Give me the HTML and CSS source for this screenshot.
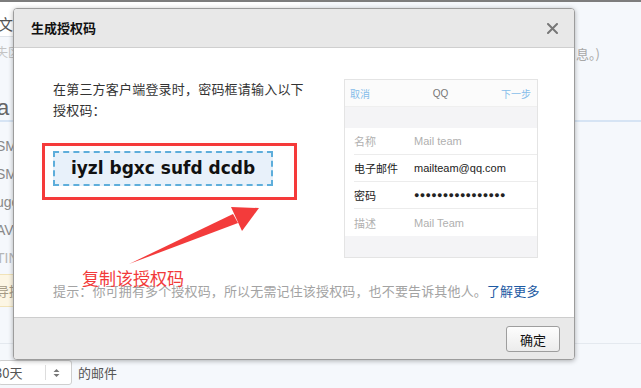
FILE: index.html
```html
<!DOCTYPE html>
<html lang="zh-CN">
<head>
<meta charset="utf-8">
<title>生成授权码</title>
<link rel="stylesheet" href="styles.css">
</head>
<body>
<div class="page">
  <div class="top-rule"></div>
  <div class="tabs"><span class="tab-txt">文</span></div>
  <div class="notice"><span class="notice-l">失区</span><span class="notice-r">息。)</span></div>
  <div class="big">a</div>
  <ul class="list">
    <li>SMTP</li>
    <li>SMTP</li>
    <li>uge</li>
    <li>AV</li>
    <li class="faint">TIN</li>
  </ul>
  <div class="tipbox">导提</div>
  <div class="lower-rule"></div>
  <div class="bottom-row">
    <div class="select"><span class="sel-val">30天</span><span class="sel-arrow"><svg width="7" height="10" viewBox="0 0 7 10"><path d="M0.5 4 L3.5 1 L6.5 4 Z M0.5 6 L3.5 9 L6.5 6 Z" fill="#777"/></svg></span></div>
    <span class="bottom-txt">的邮件</span>
  </div>
</div>

<div class="dialog">
  <div class="dlg-head">
    <span class="dlg-title">生成授权码</span>
    <svg class="dlg-close" width="11" height="11" viewBox="0 0 11 11"><path d="M1 1 L10 10 M10 1 L1 10" stroke="#777" stroke-width="2" stroke-linecap="round"/></svg>
  </div>
  <div class="dlg-body">
    <div class="dlg-top">
      <div class="left-col">
        <p class="intro">在第三方客户端登录时，密码框请输入以下<br>授权码：</p>
        <div class="red-box">
          <div class="code-box">iyzl bgxc sufd dcdb</div>
        </div>
      </div>
      <div class="phone">
        <div class="ph-head">
          <span class="ph-cancel">取消</span>
          <span class="ph-title">QQ</span>
          <span class="ph-next">下一步</span>
        </div>
        <div class="ph-gap"></div>
        <div class="ph-rows">
          <div class="ph-row muted"><span class="ph-label">名称</span><span class="ph-val">Mail team</span></div>
          <div class="ph-row"><span class="ph-label">电子邮件</span><span class="ph-val">mailteam@qq.com</span></div>
          <div class="ph-row"><span class="ph-label">密码</span><span class="ph-val dots">●●●●●●●●●●●●●●●●</span></div>
          <div class="ph-row muted"><span class="ph-label">描述</span><span class="ph-val">Mail Team</span></div>
        </div>
      </div>
    </div>
    <p class="hint">提示：你可拥有多个授权码，所以无需记住该授权码，也不要告诉其他人。<a class="more" href="#">了解更多</a></p>
  </div>
  <div class="dlg-foot">
    <button class="btn-ok" type="button">确定</button>
  </div>
</div>

<svg class="arrow" width="641" height="388" viewBox="0 0 641 388">
  <polygon points="129,264 233,214 238,223" fill="#f33b3b"/>
  <polygon points="231,207 259,208 242,231" fill="#f33b3b"/>
</svg>
<div class="copy-label">复制该授权码</div>
</body>
</html>
```

FILE: styles.css
```css
* { box-sizing: border-box; }
html, body { margin: 0; padding: 0; }
body {
  width: 641px;
  height: 388px;
  overflow: hidden;
  position: relative;
  background: #f5f8fc;
  font-family: "Liberation Sans", "Noto Sans CJK SC", sans-serif;
  font-size: 13px;
  color: #333;
}

/* background page */
.page { height: 388px; }
.top-rule { height: 2px; background: #7d7d7d; }
.tabs {
  width: 300px;
  height: 35px;
  background: #fff;
  border-bottom: 1px solid #dfe4ea;
  padding-top: 12px;
}
.tab-txt {
  display: block;
  margin-left: -2px;
  font-size: 15px;
  line-height: 20px;
  color: #555;
  font-family: "Noto Sans CJK SC", sans-serif;
}
.notice {
  display: flex;
  justify-content: space-between;
  height: 22px;
  margin-top: 5px;
  line-height: 20px;
  font-family: "Noto Sans CJK SC", sans-serif;
}
.notice-l { font-size: 12px; color: #c4c4c4; margin-left: -4px; }
.notice-r { font-size: 13px; color: #a8a8a8; margin-top: 2px; width: 65px; }
.big {
  margin-top: 31px;
  font-size: 22px;
  line-height: 25px;
  color: #666;
  margin-left: -3px;
  height: 27px;
  border-bottom: 2px solid #d6e4f4;
}
.list {
  list-style: none;
  margin: 14px 0 0 0;
  padding: 0;
}
.list li {
  height: 28px;
  line-height: 20px;
  margin-left: -4px;
  color: #8a8a8a;
  font-size: 14px;
}
.list li.faint { color: #b6b6b6; height: 26px; }
.tipbox {
  width: 300px;
  height: 33px;
  line-height: 31px;
  background: #fcf6e4;
  border-top: 1px solid #f1e3b8;
  border-bottom: 1px solid #f1e3b8;
  color: #a49a85;
  margin-left: -4px;
  font-family: "Noto Sans CJK SC", sans-serif;
}
.lower-rule {
  height: 37px;
  border-bottom: 1px solid #e4e9ef;
}
.bottom-row {
  display: flex;
  align-items: center;
  margin-top: 16px;
}
.select {
  display: flex;
  align-items: center;
  width: 74px;
  height: 25px;
  margin-left: -2px;
  border: 1px solid #cfcfcf;
  border-radius: 3px;
  background: #fff;
}
.sel-val {
  width: 51px;
  color: #555;
  font-family: "Noto Sans CJK SC", sans-serif;
  border-right: 1px solid #ddd;
  line-height: 15px;
  margin-left: -4px;
}
.sel-arrow { display: flex; padding-left: 7px; }
.bottom-txt {
  margin-left: 6px;
  color: #555;
  font-family: "Noto Sans CJK SC", sans-serif;
}

/* dialog */
.dialog {
  position: absolute;
  left: 13px;
  top: 8px;
  width: 562px;
  height: 352px;
  border: 1px solid #9c9c9c;
  border-radius: 4px;
  box-shadow: 0 1px 5px rgba(0,0,0,0.3);
  background: #fff;
  display: flex;
  flex-direction: column;
  overflow: hidden;
  font-family: "Noto Sans CJK SC", sans-serif;
}
.dlg-head {
  height: 39px;
  flex: none;
  background: #e8e8e8;
  border-bottom: 1px solid #cfcfcf;
  display: flex;
  align-items: center;
  justify-content: space-between;
  padding: 0 16px 0 17px;
}
.dlg-title {
  font-size: 13px;
  font-weight: bold;
  color: #111;
  line-height: 20px;
}
.dlg-close { display: block; }

.dlg-body {
  flex: 1;
  padding: 30px 36px 0 39px;
}
.dlg-top {
  display: flex;
  justify-content: space-between;
  align-items: flex-start;
}
.left-col { width: 262px; }
.intro {
  margin: 0;
  font-size: 13px;
  line-height: 21px;
  letter-spacing: 0.2px;
  color: #333;
}
.red-box {
  margin: 23px 0 0 -11px;
  width: 255px;
  height: 57px;
  border: 3px solid #f53a3a;
  padding: 5px 0 0 8px;
}
.code-box {
  width: 220px;
  height: 35px;
  border: 2px dashed #5eaedb;
  background: #e8f1fa;
  display: flex;
  align-items: center;
  justify-content: center;
  font-family: "DejaVu Sans", Verdana, sans-serif;
  font-weight: bold;
  font-size: 17px;
  color: #111;
  padding-bottom: 1px;
}

.phone {
  margin-top: 1px;
  width: 194px;
  height: 179px;
  border: 1px solid #e4e4e4;
  background: #f4f4f6;
}
.ph-head {
  height: 27px;
  background: #fbfbfb;
  border-bottom: 1px solid #efefef;
  display: flex;
  align-items: center;
  justify-content: space-between;
  padding: 0 6px 0 5px;
  font-size: 10px;
}
.ph-cancel, .ph-next { color: #86bdea; width: 40px; }
.ph-next { text-align: right; }
.ph-title { color: #777; font-family: "Liberation Sans", sans-serif; font-size: 10px; }
.ph-gap { height: 21px; }
.ph-rows { background: #fff; }
.ph-row {
  display: flex;
  align-items: center;
  height: 27px;
  margin-left: 9px;
  border-bottom: 1px solid #ececec;
  font-size: 11px;
  color: #222;
}
.ph-row:last-child { border-bottom: none; }
.ph-label { width: 60px; }
.ph-val { font-family: "Liberation Sans", sans-serif; font-size: 11px; }
.ph-val.dots { font-size: 9px; letter-spacing: 0.3px; }
.ph-row.muted { color: #b0b0b0; }

.hint {
  margin: 23px 0 0 0;
  font-size: 13px;
  line-height: 20px;
  letter-spacing: 0.15px;
  color: #a3a3a3;
  white-space: nowrap;
}
.more { color: #1d5aa3; text-decoration: none; }

.dlg-foot {
  height: 42px;
  flex: none;
  background: #e9e9e9;
  border-top: 1px solid #cdcdcd;
  display: flex;
  justify-content: flex-end;
  align-items: flex-start;
  padding: 8px 14px 0 0;
}
.btn-ok {
  width: 54px;
  height: 26px;
  border: 1px solid #9e9e9e;
  border-radius: 3px;
  background: linear-gradient(#fdfdfd, #ececec);
  font-family: "Noto Sans CJK SC", sans-serif;
  font-size: 13px;
  color: #111;
  padding: 0;
}

/* annotations */
.arrow {
  position: absolute;
  left: 0;
  top: 0;
  pointer-events: none;
}
.copy-label {
  position: absolute;
  left: 82px;
  top: 267px;
  font-family: "Noto Sans CJK SC", sans-serif;
  font-size: 17px;
  line-height: 22px;
  color: #f23a3a;
}
```
